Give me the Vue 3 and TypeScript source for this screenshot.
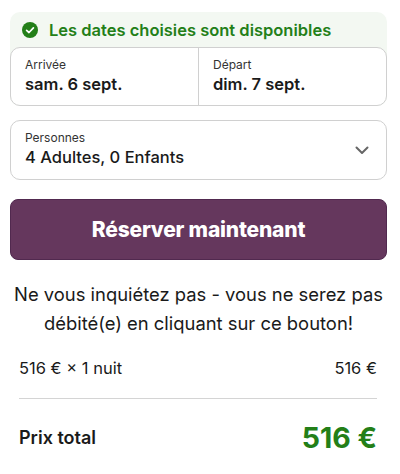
<script setup lang="ts">
const dates = [
  { label: 'Arrivée', value: 'sam. 6 sept.' },
  { label: 'Départ', value: 'dim. 7 sept.' },
]
</script>

<template>
  <main class="page">
    <section class="availability">
      <div class="banner">
        <svg class="check" viewBox="0 0 16 16" width="16" height="16" aria-hidden="true">
          <circle cx="8" cy="8" r="8" fill="#237f18" />
          <path d="M4.6 8.3 7 10.5l4.4-4.7" fill="none" stroke="#fff" stroke-width="1.7" stroke-linecap="round" stroke-linejoin="round" />
        </svg>
        <span>Les dates choisies sont disponibles</span>
      </div>
      <div class="dates">
        <div v-for="d in dates" :key="d.label" class="date">
          <div class="label">{{ d.label }}</div>
          <div class="value">{{ d.value }}</div>
        </div>
      </div>
    </section>

    <div class="guests">
      <div class="guests-text">
        <div class="label">Personnes</div>
        <div class="value guests-value">4 Adultes, 0 Enfants</div>
      </div>
      <svg class="chevron" viewBox="0 0 14 9" width="14" height="9" aria-hidden="true">
        <path d="M1.5 1.5 7 7l5.5-5.5" fill="none" stroke="#666" stroke-width="2" stroke-linecap="round" stroke-linejoin="round" />
      </svg>
    </div>

    <button class="reserve" type="button">Réserver maintenant</button>

    <p class="note">Ne vous inquiétez pas - vous ne serez pas<br />débité(e) en cliquant sur ce bouton!</p>

    <div class="line">
      <span>516 € × 1 nuit</span>
      <span>516 €</span>
    </div>

    <div class="total">
      <span class="total-label">Prix total</span>
      <span class="total-price">516 €</span>
    </div>
  </main>
</template>

<style scoped>
.page {
  box-sizing: border-box;
  width: 400px;
  height: 474px;
  padding: 12px 13px 0 10px;
  background: #fff;
  color: #1a1a1a;
  font-family: Inter, "Liberation Sans", sans-serif;
  overflow: hidden;
}
.availability {
  background: #f3f8f2;
  border-radius: 10px;
}
.banner {
  display: flex;
  align-items: center;
  gap: 11px;
  height: 35px;
  padding-left: 12px;
  color: #237f18;
  font-size: 16.5px;
  font-weight: 600;
}
.dates {
  display: flex;
  height: 59px;
  box-sizing: border-box;
  background: #fff;
  border: 1px solid #d0d0d0;
  border-radius: 10px;
}
.date {
  flex: 1;
  padding: 9px 14px 0;
}
.date + .date {
  border-left: 1px solid #d0d0d0;
}
.label {
  font-size: 12px;
  line-height: 15px;
  color: #333;
}
.value {
  margin-top: 2px;
  font-size: 16.5px;
  line-height: 20px;
  font-weight: 600;
}
.guests {
  box-sizing: border-box;
  display: flex;
  align-items: center;
  justify-content: space-between;
  height: 60px;
  margin-top: 14px;
  padding: 0 17px 0 14px;
  border: 1px solid #d0d0d0;
  border-radius: 10px;
}
.guests-text {
  padding-bottom: 3px;
}
.guests-value {
  margin-top: 2px;
  font-weight: 500;
}
.reserve {
  display: block;
  width: 100%;
  height: 61px;
  margin-top: 19px;
  border: 1px solid #51294f;
  border-radius: 8px;
  background: #65375d;
  color: #fff;
  font-family: inherit;
  font-size: 21px;
  font-weight: 800;
  letter-spacing: -0.2px;
}
.note {
  margin: 20px 0 0;
  text-align: center;
  font-size: 18.4px;
  line-height: 29px;
  color: #1a1a1a;
}
.line {
  display: flex;
  justify-content: space-between;
  margin: 20px 10px 0 9px;
  padding: 0 0 20px;
  font-size: 16.5px;
  line-height: 20px;
  border-bottom: 1px solid #d4d4d4;
}
.total {
  display: flex;
  align-items: center;
  justify-content: space-between;
  margin: 20px 10px 0 9px;
  height: 36px;
}
.total-label {
  font-size: 18px;
  font-weight: 600;
}
.total-price {
  font-size: 28.5px;
  font-weight: 700;
  color: #237f18;
}
</style>
